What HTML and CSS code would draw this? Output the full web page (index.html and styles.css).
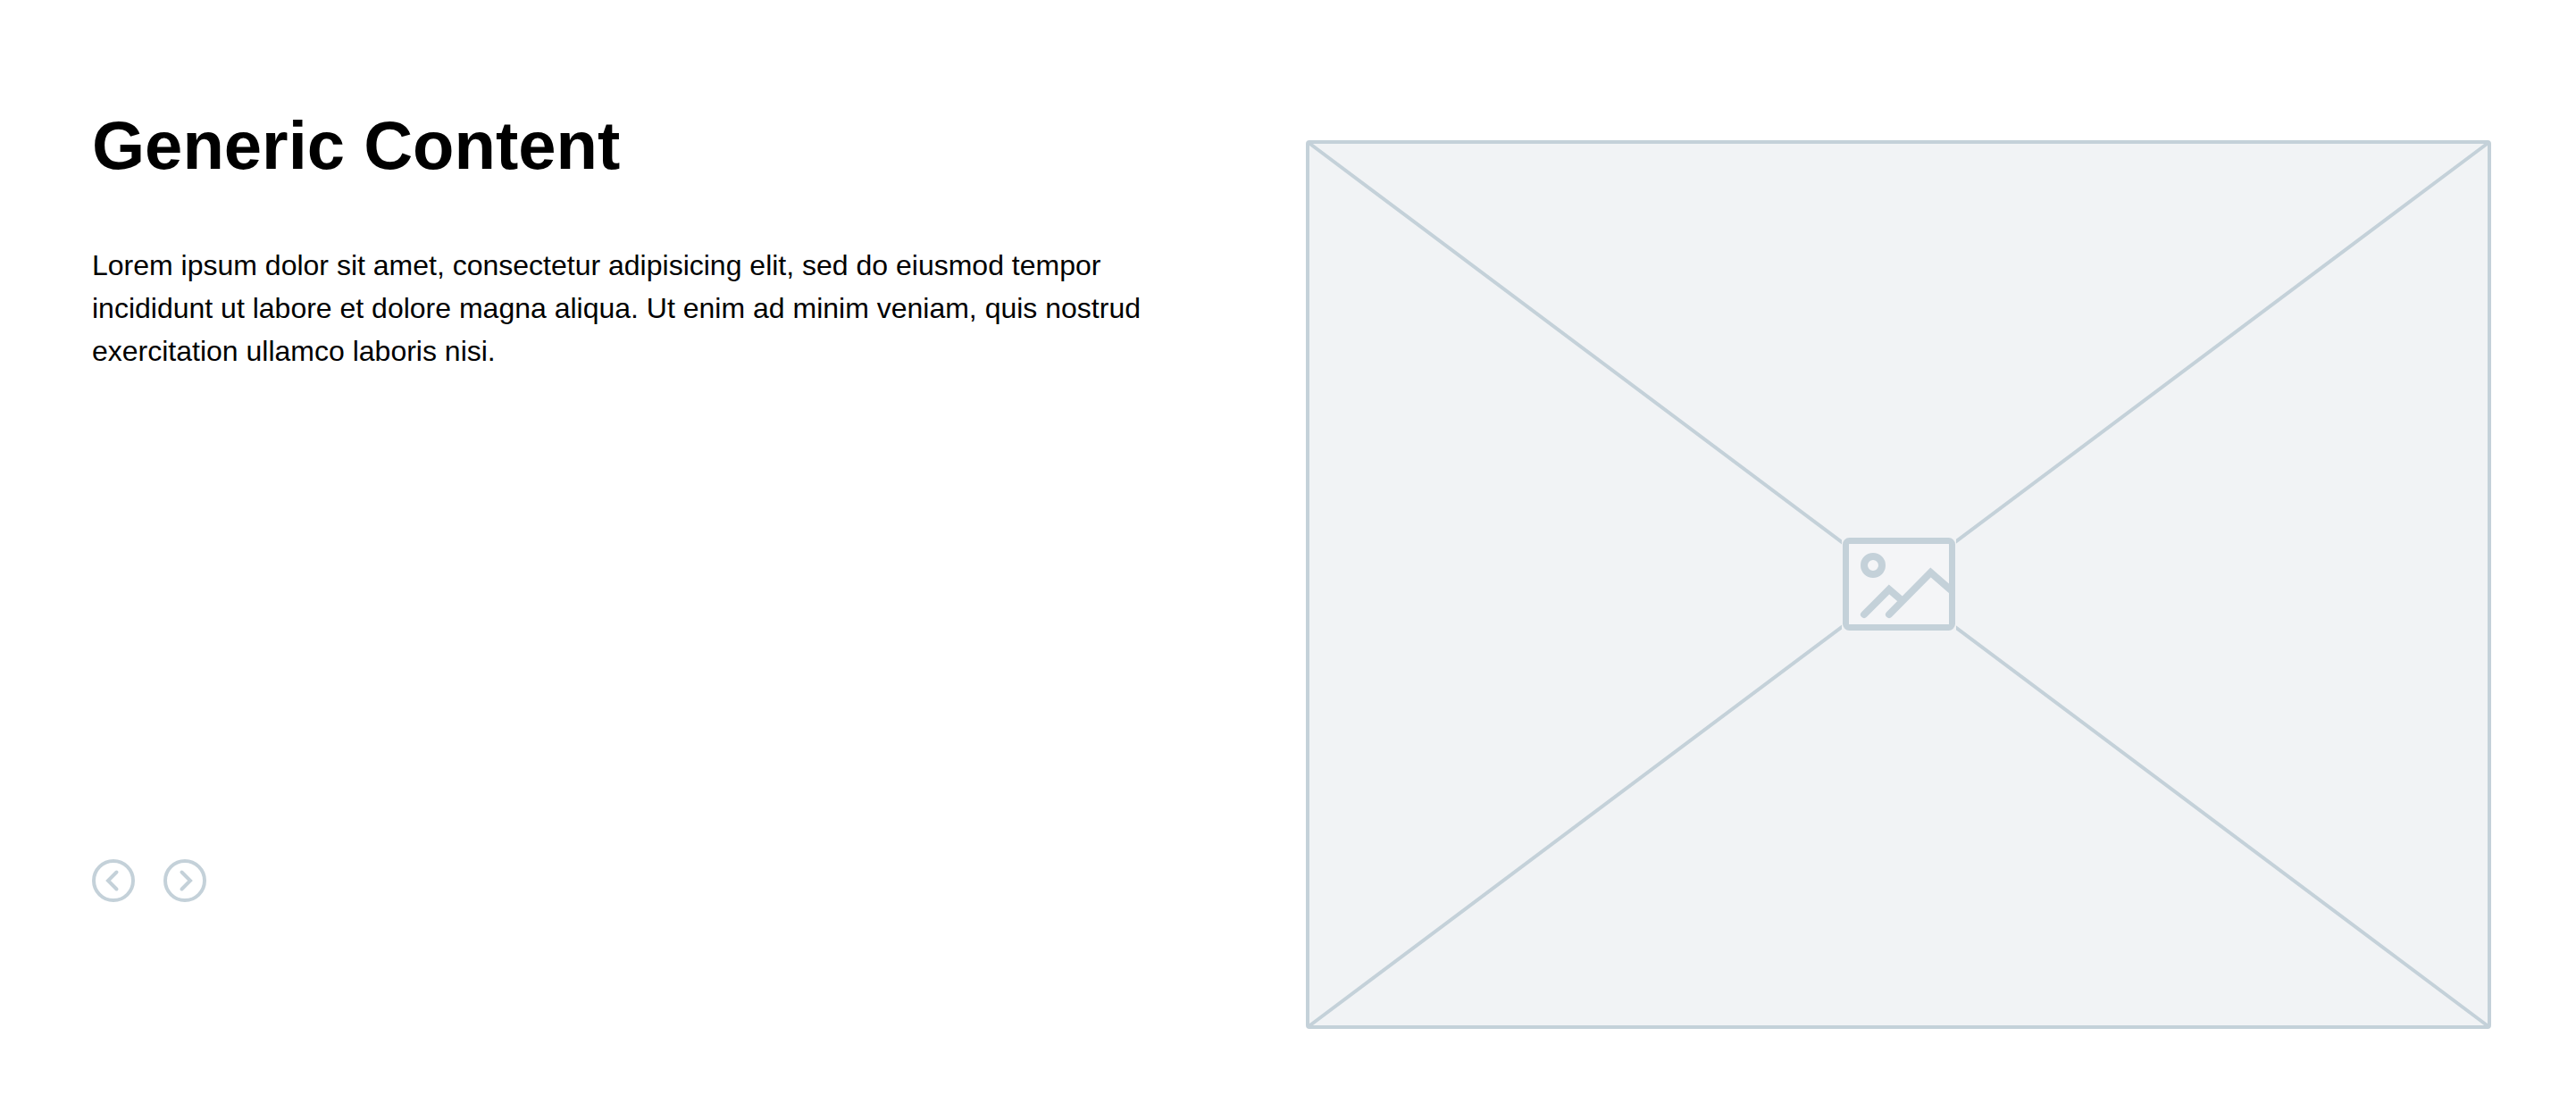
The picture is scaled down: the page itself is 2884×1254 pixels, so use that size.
FILE: index.html
```html
<!DOCTYPE html>
<html lang="en">
<head>
  <meta charset="utf-8">
  <meta name="viewport" content="width=device-width, initial-scale=1">
  <title>Generic Content</title>
  <link rel="stylesheet" href="styles.css">
</head>
<body>
  <main class="feature">
    <section class="feature-copy">
      <h1 class="feature-title">Generic Content</h1>
      <p class="feature-text">Lorem ipsum dolor sit amet, consectetur adipisicing elit, sed do eiusmod tempor incididunt ut labore et dolore magna aliqua. Ut enim ad minim veniam, quis nostrud exercitation ullamco laboris nisi.</p>
      <div class="feature-controls">
        <button class="control" type="button" aria-label="Previous">
          <svg class="control-icon" viewBox="0 0 48 48" aria-hidden="true">
            <circle cx="24" cy="24" r="22"/>
            <path d="M27.5 14.500 18 24l9.500 9.500"/>
          </svg>
        </button>
        <button class="control" type="button" aria-label="Next">
          <svg class="control-icon" viewBox="0 0 48 48" aria-hidden="true">
            <circle cx="24" cy="24" r="22"/>
            <path d="M20.500 14.500 30 24l-9.500 9.500"/>
          </svg>
        </button>
      </div>
    </section>
    <figure class="feature-media">
      <svg class="placeholder" viewBox="0 0 1327 995" role="img" aria-label="Image placeholder">
        <rect class="placeholder-frame" x="2" y="2" width="1323" height="991" rx="2"/>
        <path class="placeholder-line" d="M2 2 1325 993M1325 2 2 993"/>
        <rect class="placeholder-gap" x="600" y="444" width="128" height="106"/>
        <rect class="placeholder-icon placeholder-card" x="604.500" y="448.500" width="119" height="97" rx="4"/>
        <circle class="placeholder-icon placeholder-scene" cx="635" cy="476" r="10"/>
        <path class="placeholder-icon placeholder-scene" d="M625 531l28-28 14 12M653 531l46.500-47 23 20"/>
      </svg>
    </figure>
  </main>
</body>
</html>
```
FILE: styles.css
```css
* {
  box-sizing: border-box;
}

body {
  margin: 0;
  background: #fff;
  color: #000;
  font-family: "Helvetica Neue", Helvetica, "Liberation Sans", Arial, sans-serif;
}

.feature {
  display: grid;
  grid-template-columns: 1fr 1fr;
  gap: 32px;
  padding: 119px 95px 96px 103px;
}

.feature-copy {
  display: flex;
  flex-direction: column;
  padding-right: 96px;
}

.feature-title {
  margin: 0;
  font-size: 76px;
  line-height: 88px;
}

.feature-text {
  margin: 66px 0 0;
  font-size: 32px;
  line-height: 48px;
}

.feature-controls {
  display: flex;
  gap: 32px;
  margin-top: auto;
  padding-bottom: 142px;
}

.control {
  width: 48px;
  height: 48px;
  padding: 0;
  border: 0;
  border-radius: 50%;
  background: none;
  cursor: pointer;
}

.control-icon {
  display: block;
  width: 100%;
  fill: none;
  stroke: #c4d1d9;
  stroke-width: 4;
  stroke-linecap: round;
}

.feature-media {
  margin: 38px 0 0;
}

.placeholder {
  display: block;
  width: 100%;
}

.placeholder-frame {
  fill: #f1f3f5;
  stroke: #c4d1d9;
  stroke-width: 4;
}

.placeholder-line {
  fill: none;
  stroke: #c4d1d9;
  stroke-width: 4;
}

.placeholder-gap {
  fill: #f1f3f5;
}

.placeholder-icon {
  fill: none;
  stroke: #c4d1d9;
  stroke-width: 7;
  stroke-linecap: round;
}

.placeholder-card {
  fill: #f4f5f7;
}

.placeholder-scene {
  stroke-width: 8;
}
```
